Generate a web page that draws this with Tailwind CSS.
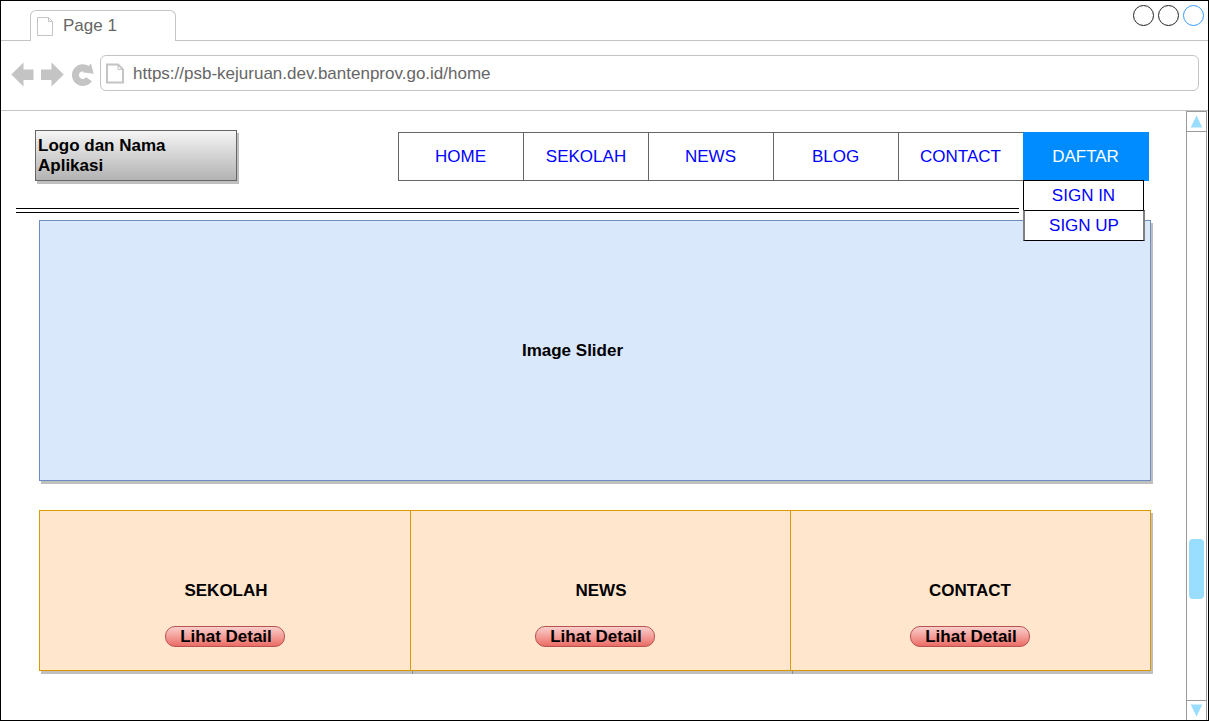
<!DOCTYPE html>
<html lang="id">
<head>
<meta charset="utf-8">
<title>Page 1</title>
<script src="https://cdn.jsdelivr.net/npm/@tailwindcss/browser@4"></script>
</head>
<body class="bg-white">
<div class="flex h-[721px] w-[1209px] flex-col overflow-hidden border border-black font-['Liberation_Sans',Arial,sans-serif] text-[17px] leading-5 text-black">
  <!-- Tab strip -->
  <header class="flex h-10 shrink-0 items-end">
    <div class="h-full w-[29px] border-b border-[#c4c4c4]"></div>
    <div class="flex h-[31px] w-[146px] rounded-t-md border border-b-0 border-[#c4c4c4] pl-[6px] pt-[5px] text-[#666]">
      <svg class="mt-px h-5 w-[17px] shrink-0" viewBox="0 0 17 20" fill="none" stroke="#c4c4c4"><path d="M.5.5h11l4 4v14H.5zM11.5.5v4h4"/></svg>
      <span class="ml-[9px]">Page 1</span>
    </div>
    <div class="flex h-full flex-1 justify-end gap-[3px] border-b border-[#c4c4c4] pr-1 pt-1">
      <svg class="size-[22px]" viewBox="0 0 22 22" fill="none" stroke="#222"><circle cx="11.500" cy="10.500" r="10"/></svg>
      <svg class="size-[22px]" viewBox="0 0 22 22" fill="none" stroke="#222"><circle cx="11.500" cy="10.500" r="10"/></svg>
      <svg class="size-[22px]" viewBox="0 0 22 22" fill="none" stroke="#3399ff"><circle cx="11.500" cy="10.500" r="10"/></svg>
    </div>
  </header>
  <!-- Address bar -->
  <div class="flex h-[70px] shrink-0 border-b border-[#c4c4c4] pl-2.5 pt-[14px]">
    <svg class="h-9 w-[89px] shrink-0" viewBox="11 55 89 36" fill="#c4c4c4">
      <path d="M11.300 74.500 23.500 62.500v7H33.500v10.500H23.500v6.500z"/>
      <path d="M63.700 74.500 51.500 62.500v7H41v10.500h10.500v6.500z"/>
      <path d="M88 69.700A7.400 7.400 0 1 0 89 79.200" fill="none" stroke="#c4c4c4" stroke-width="7"/>
      <path d="M91 63.500 93.700 73.800 82.300 72.300z"/>
    </svg>
    <div class="flex h-9 w-[1099px] rounded-md border border-[#c4c4c4] pl-[5px] pt-2 text-[#666]">
      <svg class="-mt-px h-[22px] w-[19px] shrink-0" viewBox="0 0 19 22" fill="none" stroke="#c4c4c4" stroke-width="2"><path d="M1 1.500h11l5 5v13H1z"/><path d="M12 1.500v5h5" stroke-width="1"/></svg>
      <span class="ml-2">https://psb-kejuruan.dev.bantenprov.go.id/home</span>
    </div>
  </div>
  <div class="flex min-h-0 flex-1">
    <!-- Page content -->
    <main class="w-[1185px] shrink-0">
      <div class="flex h-[97px] pl-[34px] pt-[19px]">
        <div class="h-[51px] w-[202px] border border-[#666] bg-linear-to-b from-[#f5f5f5] to-[#b3b3b3] pl-0.5 pt-[5px] font-bold shadow-[2px_3px_0_#bfbfbf]">Logo dan Nama<br>Aplikasi</div>
        <nav class="ml-[161px] mt-0.5 flex h-[49px] text-center leading-[47px] text-[#0000ff]">
          <div class="w-[125px] border border-r-0 border-[#666] pr-px">HOME</div>
          <div class="w-[125px] border border-r-0 border-[#666]">SEKOLAH</div>
          <div class="w-[125px] border border-r-0 border-[#666] pr-px">NEWS</div>
          <div class="w-[125px] border border-r-0 border-[#666] pr-px">BLOG</div>
          <div class="w-[125px] border border-r-0 border-[#666] pr-px">CONTACT</div>
          <div class="relative w-[126px] bg-[#008cff] pr-px leading-[49px] text-white">DAFTAR
            <div class="absolute left-0 top-12 z-10 w-[122px] leading-[29px] text-[#0000ff]">
              <div class="h-[31px] w-[121px] border border-black bg-white">SIGN IN</div>
              <div class="-mt-px h-[31px] w-[122px] border border-black border-x-2 border-x-[#808080] bg-white">SIGN UP</div>
            </div>
          </div>
        </nav>
      </div>
      <div class="ml-[15px] h-[5px] w-[1003px] border-y border-black"></div>
      <section class="ml-[38px] mt-[7px] h-[261px] w-[1112px] border border-[#6c8ebf] bg-[#dae8fc] pr-[45px] text-center font-bold leading-[259px] shadow-[2px_3px_0_#bfbfbf]">Image Slider</section>
      <section class="ml-[38px] mt-[29px] flex h-[161px] font-bold">
        <div class="flex w-[372px] flex-col items-center border border-[#d79b00] bg-[#ffe6cc] pt-[70px] shadow-[2px_3px_0_rgb(0_0_0/0.25)]">
          <h2 class="ml-0.5">SEKOLAH</h2>
          <button class="mt-[25px] h-[21px] w-[120px] rounded-[10px] border border-[#b85450] bg-linear-to-b from-[#f8cecc] to-[#ea6b66] pl-0.5 leading-[19px]">Lihat Detail</button>
        </div>
        <div class="-ml-px flex w-[381px] flex-col items-center border border-[#d79b00] bg-[#ffe6cc] pt-[70px] shadow-[2px_3px_0_rgb(0_0_0/0.25)]">
          <h2 class="ml-px">NEWS</h2>
          <button class="mr-[11px] mt-[25px] h-[21px] w-[120px] rounded-[10px] border border-[#b85450] bg-linear-to-b from-[#f8cecc] to-[#ea6b66] pl-0.5 leading-[19px]">Lihat Detail</button>
        </div>
        <div class="-ml-px flex w-[361px] flex-col items-center border border-[#d79b00] bg-[#ffe6cc] pt-[70px] shadow-[2px_3px_0_rgb(0_0_0/0.25)]">
          <h2 class="mr-px">CONTACT</h2>
          <button class="mr-px mt-[25px] h-[21px] w-[120px] rounded-[10px] border border-[#b85450] bg-linear-to-b from-[#f8cecc] to-[#ea6b66] pl-0.5 leading-[19px]">Lihat Detail</button>
        </div>
      </section>
    </main>
    <!-- Scrollbar -->
    <aside class="flex h-[610px] w-[21px] flex-col border border-[#999]">
      <div class="h-5 border-b border-[#999]"><svg class="size-[19px]" viewBox="0 0 19 19" fill="#99ddff"><path d="M9.500 3.500 15.300 15.500H3.700z"/></svg></div>
      <div class="flex-1 pt-[407px]"><div class="ml-[2px] h-[60px] w-[15px] rounded-[4px] bg-[#99ddff]"></div></div>
      <div class="h-5 border-t border-[#999]"><svg class="size-[19px]" viewBox="0 0 19 19" fill="#99ddff"><path d="M3.700 3.500H15.300L9.500 15.500z"/></svg></div>
    </aside>
  </div>
</div>
</body>
</html>
